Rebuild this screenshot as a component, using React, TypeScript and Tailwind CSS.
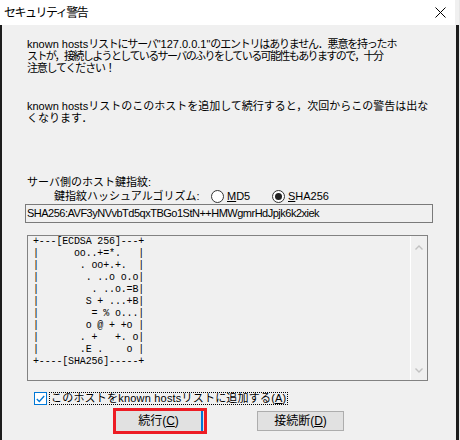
import React from 'react'

const ART = [
  '+---[ECDSA 256]---+',
  '|      oo..+=*.   |',
  '|       . oo+.+.  |',
  '|        . ..o o.o|',
  '|         . ..o.=B|',
  '|        S + ...+B|',
  '|         = % o...|',
  '|        o @ + +o |',
  '|       . +   +. o|',
  '|       .E .    o |',
  '+----[SHA256]-----+',
]

function Radio({ checked }: { checked?: boolean }) {
  return (
    <span className="flex h-[13px] w-[13px] shrink-0 items-center justify-center rounded-full border border-[#333333] bg-white">
      {checked && <span className="h-[7px] w-[7px] rounded-full bg-[#222222]" />}
    </span>
  )
}

export default function App() {
  return (
    <div className="flex h-[440px] w-[460px] overflow-hidden bg-[#f0f0f0] font-['Liberation_Sans','Noto_Sans_CJK_JP',sans-serif] text-black">
      <div className="flex w-[459px] flex-col">
        {/* Title bar */}
        <div className="mr-[4px] flex h-[25px] shrink-0 items-center justify-between bg-white pl-[4px] pr-[9px]">
          <span className="text-[12px] tracking-[-1.5px]">セキュリティ警告</span>
          <svg width="11" height="11" viewBox="0 0 11 11">
            <path d="M0.5 0.5L10.5 10.5M10.5 0.5L0.5 10.5" stroke="#000" strokeWidth="1" />
          </svg>
        </div>

        <div className="flex flex-1 flex-col border-l-2 border-r-[3px] border-[#1c1c1c] pl-[23px]">
          <p className="mt-[13px] ml-[2px] whitespace-nowrap text-[11px] leading-[12px] tracking-[-1.2px]">
            <span className="tracking-normal">known hosts</span>リストにサーバ<span className="tracking-normal">"127.0.0.1"</span>のエントリはありません．悪意を持ったホ
            <br />
            <span className="tracking-[-1.6px]">ストが，接続しようとしているサーバのふりをしている可能性もありますので，十分</span>
            <br />
            注意してください！
          </p>

          <p className="mt-[26px] ml-[2px] whitespace-nowrap text-[11px] leading-[12px]">
            known hostsリストのこのホストを追加して続行すると，次回からこの警告は出な
            <br />
            くなります．
          </p>

          <p className="mt-[52px] ml-[2px] text-[11px] leading-[12px]">サーバ側のホスト鍵指紋:</p>

          {/* Hash algorithm */}
          <div className="mt-[1px] ml-[29px] flex h-[14px] items-center text-[11px]">
            <span className="w-[157px]">鍵指紋ハッシュアルゴリズム:</span>
            <span className="flex w-[61px] items-center gap-[3px]">
              <Radio />
              <span><span className="underline underline-offset-[1px]">M</span>D5</span>
            </span>
            <span className="flex items-center gap-[3px]">
              <Radio checked />
              <span><span className="underline underline-offset-[1px]">S</span>HA256</span>
            </span>
          </div>

          {/* Fingerprint */}
          <div className="mt-[1px] flex h-[19px] w-[408px] items-center border border-[#7a7a7a] pl-[1px] text-[11px] tracking-[-0.5px]">
            SHA256:AVF3yNVvbTd5qxTBGo1StN++HMWgmrHdJpjk6k2xiek
          </div>

          {/* Randomart */}
          <div className="mt-[12px] ml-[2px] flex h-[146px] w-[401px] border border-[#828282]">
            <pre className="flex-1 pl-[5px] font-['Liberation_Mono',monospace] text-[10px] leading-[12px] tracking-[-0.15px]">
              {ART.join('\n')}
            </pre>
            <div className="flex w-[17px] flex-col items-center justify-between border-l border-white pt-[9px] pb-[7px]">
              <svg width="8" height="5" viewBox="0 0 8 5">
                <path d="M0.5 4.5L4 1L7.5 4.5" fill="none" stroke="#c2c2c2" strokeWidth="1.4" />
              </svg>
              <svg width="8" height="5" viewBox="0 0 8 5">
                <path d="M0.5 0.5L4 4L7.5 0.5" fill="none" stroke="#c2c2c2" strokeWidth="1.4" />
              </svg>
            </div>
          </div>

          {/* Checkbox */}
          <div className="mt-[11px] ml-[9px] flex h-[13px] items-center gap-[2px] text-[11px]">
            <span className="flex h-[13px] w-[13px] items-center justify-center border border-[#0078d7] bg-white">
              <svg width="9" height="8" viewBox="0 0 9 8">
                <path d="M0.8 4L3.3 6.5L8.2 1" fill="none" stroke="#0078d7" strokeWidth="1.3" />
              </svg>
            </span>
            <span className="border border-dotted border-black px-[1px] leading-[11px] tracking-[0.2px]">
              このホストをknown hostsリストに追加する(<span className="underline underline-offset-[1px]">A</span>)
            </span>
          </div>

          {/* Buttons */}
          <div className="mt-[3px] ml-[88px] flex items-start text-[12px]">
            <div className="flex h-[26px] w-[94px] border-[3px] border-[#ed1c24] bg-[#e1e1e1]">
              <div className="mr-[1px] flex flex-1 items-center justify-center border-r-2 border-[#0078d7]">
                続行(<span className="underline underline-offset-[1px]">C</span>)
              </div>
            </div>
            <div className="mt-[3px] ml-[50px] flex h-[20px] w-[87px] items-center justify-center border border-[#adadad] bg-[#e1e1e1]">
              接続断(<span className="underline underline-offset-[1px]">D</span>)
            </div>
          </div>
        </div>
      </div>
      <div className="w-[1px] bg-[#e6e6e6]" />
    </div>
  )
}
